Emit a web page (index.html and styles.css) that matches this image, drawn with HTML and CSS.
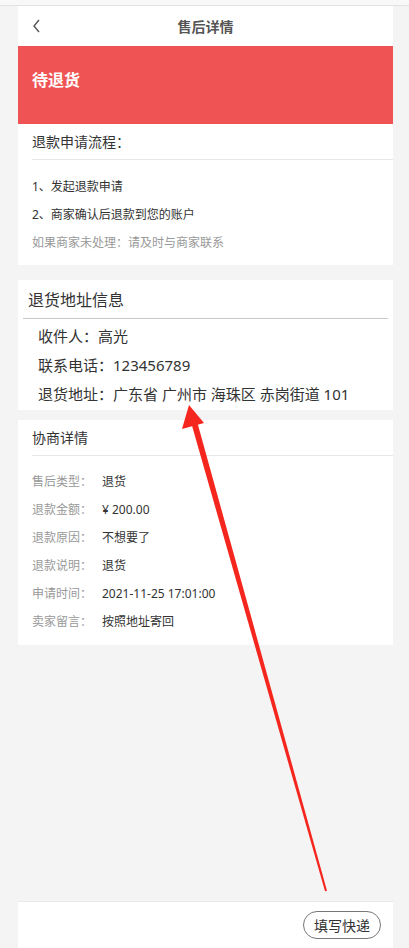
FILE: index.html
```html
<!DOCTYPE html>
<html lang="zh-CN">
<head>
  <meta charset="UTF-8" />
  <meta name="viewport" content="width=device-width, initial-scale=1.0"/>
  <title>售后详情</title>
  <link rel="stylesheet" href="styles.css">
</head>
<body>

<div class="topline"></div>

<div class="page">
  <!-- HEADER -->
  <header class="navbar">
    <svg class="back" width="10" height="14" viewBox="0 0 10 14">
      <polyline points="7,1 2,7 7,13" fill="none" stroke="#555" stroke-width="1.4"/>
    </svg>
    <h1>售后详情</h1>
  </header>

  <div class="status">待退货</div>

  <!-- REFUND FLOW -->
  <section class="card flow">
    <div class="card-title">退款申请流程：</div>
    <div class="flow-list">
      <p>1、发起退款申请</p>
      <p>2、商家确认后退款到您的账户</p>
      <p class="muted">如果商家未处理：请及时与商家联系</p>
    </div>
  </section>

  <!-- RETURN ADDRESS -->
  <section class="card address">
    <div class="address-title">退货地址信息</div>
    <div class="address-list">
      <p>收件人：高光</p>
      <p>联系电话：123456789</p>
      <p>退货地址：广东省 广州市 海珠区 赤岗街道 101</p>
    </div>
  </section>

  <!-- NEGOTIATION -->
  <section class="card detail">
    <div class="card-title">协商详情</div>
    <div class="detail-list">
      <div class="row"><span class="label">售后类型：</span><span>退货</span></div>
      <div class="row"><span class="label">退款金额：</span><span>¥ 200.00</span></div>
      <div class="row"><span class="label">退款原因：</span><span>不想要了</span></div>
      <div class="row"><span class="label">退款说明：</span><span>退货</span></div>
      <div class="row"><span class="label">申请时间：</span><span>2021-11-25 17:01:00</span></div>
      <div class="row"><span class="label">卖家留言：</span><span>按照地址寄回</span></div>
    </div>
  </section>

  <div class="spacer"></div>

  <footer class="bottombar">
    <button class="btn">填写快递</button>
  </footer>
</div>

<!-- annotation arrow drawn over the screenshot -->
<svg class="arrow" width="409" height="948" viewBox="0 0 409 948">
  <polygon points="196.9,421 191.1,422.6 325,891.3 327,890.7" fill="#f5261d"/>
  <polygon points="189,405 182,429 204,423" fill="#f5261d"/>
</svg>

</body>
</html>
```

FILE: styles.css
```css
body {
  margin: 0;
  font-family: "Noto Sans", "Noto Sans CJK SC", sans-serif;
  background: #f4f4f4;
  color: #333;
}
p {
  margin: 0;
}
.topline {
  height: 5px;
  background: #f8f8f8;
  border-bottom: 1px solid #e2e2e2;
}
.page {
  width: 375px;
  margin-left: 18px;
  height: 942px;
  display: flex;
  flex-direction: column;
}

/* Header */
.navbar {
  height: 40px;
  background: #fff;
  position: relative;
  display: flex;
  align-items: center;
  justify-content: center;
}
.navbar h1 {
  margin: 0;
  font-size: 14px;
  font-weight: bold;
  color: #555;
}
.back {
  position: absolute;
  left: 14px;
  top: 13px;
}
.status {
  height: 78px;
  box-sizing: border-box;
  background: #f05353;
  color: #fff;
  font-size: 16px;
  font-weight: bold;
  line-height: 22px;
  padding: 23px 0 0 14px;
}

/* Cards */
.card {
  background: #fff;
}
.card-title {
  height: 35px;
  line-height: 35px;
  margin-left: 14px;
  font-size: 14px;
  border-bottom: 1px solid #e8e8e8;
}
.flow-list {
  padding: 13px 14px 8px;
  font-size: 12px;
}
.flow-list p {
  line-height: 28px;
}
.muted {
  color: #999;
}

.address {
  margin-top: 15px;
  padding: 0 5px;
}
.address-title {
  font-size: 16px;
  padding: 8px 0 6px 5px;
  line-height: 24px;
  border-bottom: 1px solid #c8c8c8;
}
.address-list {
  padding: 3px 0 1px 15px;
  font-size: 15px;
}
.address-list p {
  line-height: 29px;
}

.detail {
  margin-top: 10px;
}
.detail-list {
  padding: 12px 14px 9px;
  font-size: 12px;
}
.row {
  display: flex;
  line-height: 28px;
}
.label {
  width: 70px;
  color: #999;
}

.spacer {
  flex: 1;
}

/* Bottom bar */
.bottombar {
  height: 46px;
  background: #fff;
  border-top: 1px solid #e8e8e8;
  display: flex;
  justify-content: flex-end;
  align-items: center;
  padding-right: 12px;
}
.btn {
  height: 28px;
  width: 78px;
  border: 1px solid #777;
  border-radius: 14px;
  background: #fff;
  color: #333;
  font-family: inherit;
  font-size: 14px;
  padding: 0;
}

.arrow {
  position: absolute;
  left: 0;
  top: 0;
  pointer-events: none;
}
```
